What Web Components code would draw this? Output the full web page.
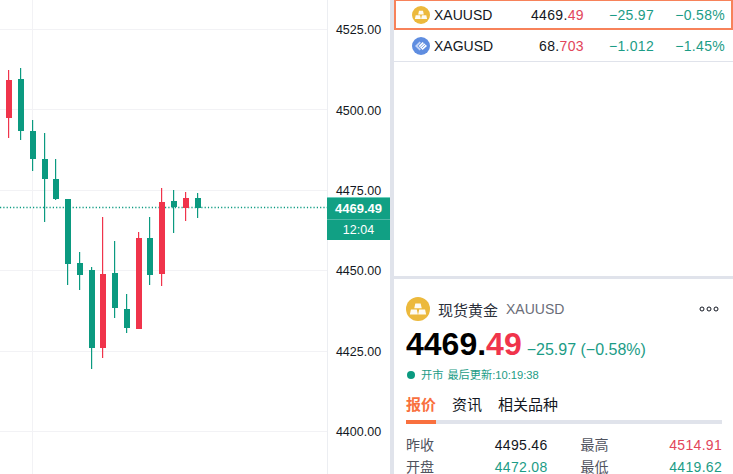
<!DOCTYPE html>
<html lang="zh"><head><meta charset="utf-8"><style>
html,body{margin:0;padding:0;height:100%;overflow:hidden;background:#fff;font-family:"Liberation Sans","Noto Sans CJK SC",sans-serif}
</style></head><body>
<trade-page></trade-page>
<script>
const GREEN='#0b9a80',TXT='#1c9c86',RED='#f0344b';
const FONT='"Liberation Sans","Noto Sans CJK SC",sans-serif';
const GOLD=`<circle cx="9" cy="9" r="9" fill="#ecb93c"/><path fill="#fff" fill-opacity=".94" d="M7 4.8h4l.8 3.7H6.2zM3.7 9.3h4.4l.8 3.8H2.9zM9.9 9.3h4.4l.8 3.8H9.1z"/>`;
const SILVER=`<circle cx="9" cy="9" r="9" fill="#5f8de0"/><path fill="#c4d5f7" d="M3 9l4.6-4.4 1.3 1.2L5.6 9l3.3 3.2-1.3 1.2z"/><path fill="#fff" d="M6.6 9l4-3.9L15 9l-4.4 3.9z"/><path stroke="#5f8de0" stroke-width=".8" d="M8.3 9.9l3.6-3.4M9.9 11.1l3.4-3.2"/>`;

class CandleChart extends HTMLElement{
  connectedCallback(){
    const s=this.attachShadow({mode:'open'});
    const c=[['r',6,80,118,70,138],['g',18,79,131,68,140],['g',30,131,159,120,171],['g',42,159,179,133,222],['g',53,179,199,159,200],['g',65,199,264,199,285],['g',77,263,275,252,290],['g',89,270,348,267,369],['r',100,274,348,217,358],['g',112,273,308,241,318],['g',124,309,328,294,333],['r',136,238,329,232,329],['g',147,238,275,217,285],['r',159,202,274,188,286],['g',171,201,207,190,233],['r',183,198,208,192,221],['g',195,198,208,193,218]];
    const hs=[29.5,109.5,190.5,270.5,351.5,431.5];
    const labels=[[30,'4525.00'],[111,'4500.00'],[191,'4475.00'],[271,'4450.00'],[352,'4425.00'],[432,'4400.00']];
    s.innerHTML=`<style>
    :host{display:block;position:relative;width:390px;height:474px;background:#fff;overflow:hidden;font:13px ${FONT};color:#131722}
    svg{position:absolute;left:0;top:0}
    .l{position:absolute;left:327px;width:63px;text-align:center;font-size:12.5px;line-height:14px;transform:translateY(-7px)}
    .tag{position:absolute;left:327px;top:197px;width:63px;height:43px;background:#11a084;color:#fff;display:flex;flex-direction:column;font-size:12.5px;border-top:1px solid #6fd0bf;box-sizing:border-box}
    .tag div{flex:1;display:flex;align-items:center;justify-content:center}
    .tag .p{font-weight:700;font-size:13px;border-bottom:1px solid #4fb8a6}
    </style>
    <svg width="390" height="474" viewBox="0 0 390 474">
      ${hs.map(y=>`<path d="M0 ${y}H327" stroke="#f2f2f5"/>`).join('')}
      <path d="M32.5 0V474" stroke="#f2f2f5"/>
      <path d="M327.5 0V474" stroke="#eceef2"/>
      <path d="M0 207.5H327" stroke="#0b9a80" stroke-width="1.3" stroke-dasharray="1.2 2.1"/>
      ${c.map(([k,x,t,b,wt,wb])=>{const f=k=='r'?RED:GREEN;return `<rect x="${x+2}" y="${wt}" width="1.2" height="${wb-wt}" fill="${f}"/><rect x="${x}" y="${t}" width="6" height="${b-t}" fill="${f}"/>`}).join('')}
    </svg>
    ${labels.map(([y,t])=>`<div class="l" style="top:${y}px">${t}</div>`).join('')}
    <div class="tag"><div class="p">4469.49</div><div>12:04</div></div>`;
  }
}
customElements.define('candle-chart',CandleChart);

class QuoteRow extends HTMLElement{
  connectedCallback(){
    const s=this.attachShadow({mode:'open'});
    const a=n=>this.getAttribute(n);
    const sel=this.hasAttribute('selected');
    s.innerHTML=`<style>
    :host{display:flex;align-items:center;box-sizing:border-box;height:${sel?30:32}px;padding:0 8px 0 18px;font:14px ${FONT};color:#131722;
      ${sel?'border:2px solid #f7825a;border-top-width:1px;padding-left:16px;padding-right:6px':'border-bottom:1px solid #e0e3eb'}}
    svg{flex:none;margin-right:4px}
    .n{width:60px}
    .p{width:90px;text-align:right;letter-spacing:.35px}
    .p b{font-weight:400;color:#e2455a}
    .c{width:70px;text-align:right;color:${TXT};letter-spacing:.3px}
    .r{flex:1;text-align:right;color:${TXT};letter-spacing:.3px}
    </style>
    <svg width="18" height="18" viewBox="0 0 18 18">${a('icon')=='gold'?GOLD:SILVER}</svg>
    <span class="n">${a('sym')}</span><span class="p">${a('int')}<b>${a('dec')}</b></span><span class="c">${a('chg')}</span><span class="r">${a('pct')}</span>`;
  }
}
customElements.define('quote-row',QuoteRow);

class StatCell extends HTMLElement{
  connectedCallback(){
    const s=this.attachShadow({mode:'open'});
    s.innerHTML=`<style>
    :host{display:flex;justify-content:space-between;font:14px/22px ${FONT};color:#131722}
    .k{color:#50535e}.v{letter-spacing:.3px;color:var(--v,#131722)}
    </style><span class="k">${this.getAttribute('k')}</span><span class="v">${this.getAttribute('v')}</span>`;
  }
}
customElements.define('stat-cell',StatCell);

class DetailPanel extends HTMLElement{
  connectedCallback(){
    const s=this.attachShadow({mode:'open'});
    s.innerHTML=`<style>
    :host{display:block;box-sizing:border-box;height:195px;background:#fff;padding:18px 11px 0 12px;font:14px ${FONT};color:#131722;overflow:hidden}
    .head{display:flex;align-items:center;height:24px}
    .head svg.i{margin-right:8px;flex:none}
    .cn{font-size:15px;color:#2a2e39;margin-right:8px}
    .en{font-size:14px;color:#6a6d78;flex:1}
    .dots{margin-right:3px}
    .price{display:flex;align-items:baseline;margin-top:4px;height:38px;line-height:38px}
    .big{font-size:32px;font-weight:700;color:#000}
    .big b{color:${RED};font-weight:700}
    .delta{font-size:16px;color:${TXT};margin-left:5px}
    .status{display:flex;align-items:center;font-size:11.2px;line-height:16px;color:${TXT};margin-top:4px}
    .dot{width:8px;height:8px;border-radius:50%;background:${GREEN};margin:0 6px 0 1px}
    .status span+span{margin-left:4px}
    .tabs{display:flex;gap:16px;margin-top:12px;font-size:15px;line-height:20px;color:#131722}
    .tabs .on{color:#f9703e;font-weight:700}
    .track{height:4px;background:#e0e3eb;margin-top:5px}
    .track div{height:4px;width:30px;background:#f9703e}
    .grid{display:grid;grid-template-columns:1fr 1fr;column-gap:33px;margin-top:10px}
    </style>
    <div class="head"><svg class="i" width="24" height="24" viewBox="0 0 18 18">${GOLD}</svg><span class="cn">现货黄金</span><span class="en">XAUUSD</span>
      <svg class="dots" width="20" height="6" viewBox="0 0 20 6" fill="none" stroke="#131722"><circle cx="3" cy="3" r="2"/><circle cx="10" cy="3" r="2"/><circle cx="17" cy="3" r="2"/></svg></div>
    <div class="price"><span class="big">4469.<b>49</b></span><span class="delta">−25.97 (−0.58%)</span></div>
    <div class="status"><i class="dot"></i><span>开市</span><span>最后更新:10:19:38</span></div>
    <div class="tabs"><span class="on">报价</span><span>资讯</span><span>相关品种</span></div>
    <div class="track"><div></div></div>
    <div class="grid">
      <stat-cell k="昨收" v="4495.46"></stat-cell><stat-cell k="最高" v="4514.91" style="--v:#e2455a"></stat-cell>
      <stat-cell k="开盘" v="4472.08" style="--v:${TXT}"></stat-cell><stat-cell k="最低" v="4419.62" style="--v:${TXT}"></stat-cell>
    </div>`;
  }
}
customElements.define('detail-panel',DetailPanel);

class TradePage extends HTMLElement{
  connectedCallback(){
    const s=this.attachShadow({mode:'open'});
    s.innerHTML=`<style>
    :host{display:flex;width:733px;height:474px;background:#e0e3eb;overflow:hidden}
    .side{flex:1;margin-left:4px;display:flex;flex-direction:column;gap:3px}
    .list{flex:1;background:#fff}
    </style>
    <candle-chart></candle-chart>
    <div class="side"><div class="list">
      <quote-row selected icon="gold" sym="XAUUSD" int="4469." dec="49" chg="−25.97" pct="−0.58%"></quote-row>
      <quote-row icon="silver" sym="XAGUSD" int="68." dec="703" chg="−1.012" pct="−1.45%"></quote-row>
    </div><detail-panel></detail-panel></div>`;
  }
}
customElements.define('trade-page',TradePage);
</script></body></html>
